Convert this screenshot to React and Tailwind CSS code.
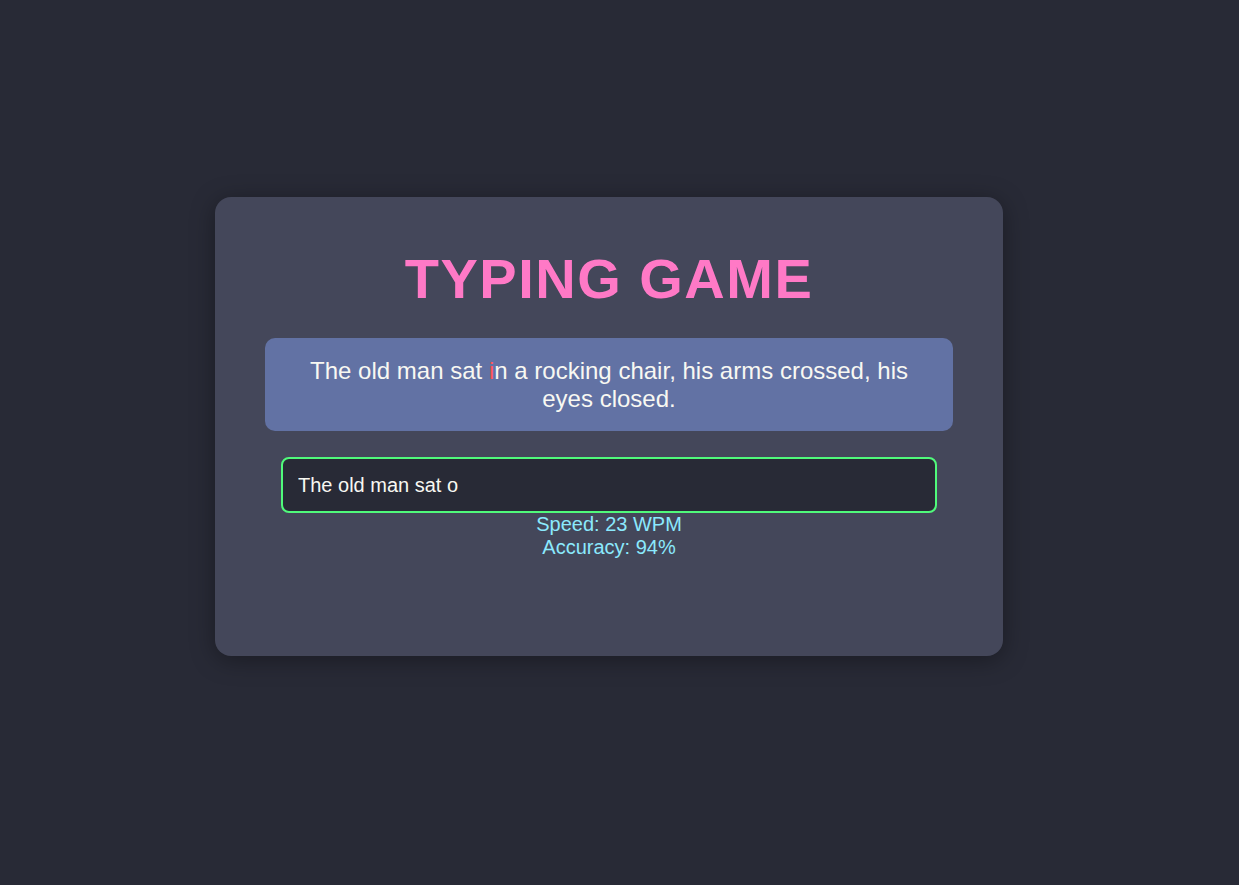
import React from "react";

export default function App() {
  const text = "The old man sat in a rocking chair, his arms crossed, his eyes closed.";
  const typed = "The old man sat o";
  const chars = text.split("");
  return (
    <div
      className="min-h-screen w-full bg-[#282a36] flex justify-center pt-[197px] pr-[21px]"
      style={{ fontFamily: '"Liberation Sans", Arial, sans-serif' }}
    >
      <div className="w-[788px] h-[459px] bg-[#44475a] rounded-[16px] p-[50px] shadow-[0_4px_24px_rgba(0,0,0,0.35)] flex flex-col items-center">
        <h1 className="text-[56px] leading-[64px] font-bold text-[#ff79c6] tracking-[1.5px] mb-[27px]">
          TYPING GAME
        </h1>
        <div className="w-full bg-[#6272a4] rounded-[10px] px-[22px] py-[19px] text-center text-[24px] leading-[27.5px] text-[#f8f8f2]">
          {chars.map((c, i) => {
            if (i === typed.length - 1) {
              return (
                <span key={i} className="text-[#ff5555]">
                  {c}
                </span>
              );
            }
            return <span key={i}>{c}</span>;
          })}
        </div>
        <input
          readOnly
          value={typed}
          className="mt-[26px] w-[656px] h-[56px] bg-[#282a36] border-2 border-[#50fa7b] rounded-[8px] px-[15px] text-[20px] text-[#f8f8f2] outline-none"
          style={{ fontFamily: '"Liberation Sans", Arial, sans-serif' }}
        />
        <div className="text-center text-[20px] leading-[23px] text-[#8be9fd]">
          <div>Speed: 23 WPM</div>
          <div>Accuracy: 94%</div>
        </div>
      </div>
    </div>
  );
}
